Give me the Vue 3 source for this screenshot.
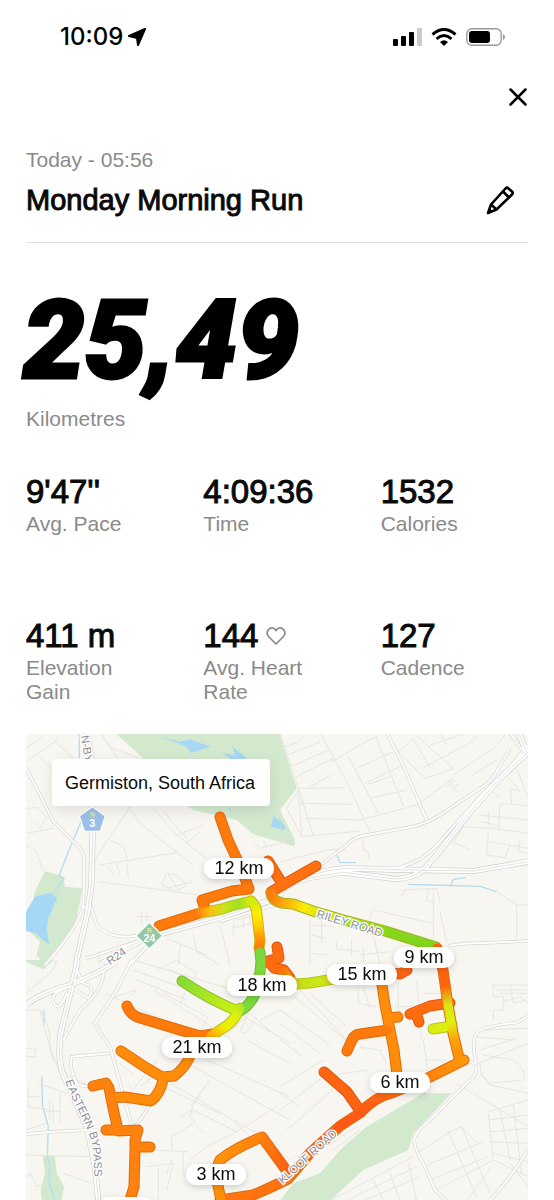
<template>
  <div class="screen">
    <header class="status-bar">
      <div class="clock">
        <span>10:09</span>
        <svg width="18" height="18" viewBox="0 0 18 18" stroke="#000" stroke-width="2" stroke-linejoin="round" aria-hidden="true">
          <path d="M17 1 L10 17 L9 10 L1 8 Z" />
        </svg>
      </div>
      <div class="indicators">
        <svg width="29" height="18" viewBox="0 0 29 18" aria-hidden="true">
          <rect x="0" y="11" width="5" height="7" rx="1" />
          <rect x="8" y="8" width="5" height="10" rx="1" />
          <rect x="16" y="4" width="5" height="14" rx="1" />
          <rect x="24" y="0" width="5" height="18" rx="1" fill="#ccc" />
        </svg>
        <svg width="26" height="18" viewBox="0 0 26 18" aria-hidden="true">
          <g fill="none" stroke="#000" stroke-width="3">
            <path d="M1.5 6.5 Q13 -3.5 24.5 6.5" />
            <path d="M5.5 10.8 Q13 4.2 20.5 10.8" />
          </g>
          <path d="M9 14 Q13 10.5 17 14 L13 18 Z" />
        </svg>
        <svg width="40" height="18" viewBox="0 0 40 18" aria-hidden="true">
          <rect x=".8" y=".8" width="34.4" height="16.4" rx="5" fill="none" stroke="#999" stroke-width="1.4" />
          <rect x="3" y="3" width="21" height="12" rx="3" />
          <path d="M37 6 Q39 7 39 9 Q39 11 37 12 Z" fill="#999" />
        </svg>
      </div>
    </header>

    <main>
      <div class="close-row">
        <button class="icon-button" aria-label="Close">
          <svg width="18" height="18" viewBox="0 0 18 18" fill="none" stroke="#000" stroke-width="2.5" stroke-linecap="round">
            <path d="M1.500 1.500 L16.500 16.500 M16.500 1.500 L1.500 16.500" />
          </svg>
        </button>
      </div>

      <section class="title-block">
        <p class="date">Today - 05:56</p>
        <div class="title-row">
          <h1>Monday Morning Run</h1>
          <button class="icon-button edit" aria-label="Edit name">
            <svg width="28" height="30" viewBox="0 0 28 30" fill="none" stroke="#000" stroke-width="2.6" stroke-linejoin="round">
              <path d="M2 28 L5 19.500 L19.500 3.500 Q21 2 22.500 3.500 L26 6.500 Q27.500 8 26 9.500 L10.500 24.500 Z" />
              <path d="M17 6.500 L23 12.500 M5 19.500 L10.500 24.500" />
              <path d="M2 28 L3.500 23.500 L6.500 26.500 Z" fill="#000" stroke-width="1" />
            </svg>
          </button>
        </div>
      </section>

      <section class="distance">
        <p class="distance-value">25,49</p>
        <p class="label">Kilometres</p>
      </section>

      <section class="stats">
        <div v-for="stat in stats" :key="stat.label" class="stat">
          <p class="value">
            {{ stat.value }}
            <svg v-if="stat.heart" width="20" height="20" viewBox="0 0 20 20" fill="none" stroke="#8a8a8a" stroke-width="1.700" stroke-linejoin="round">
              <path d="M10 18 L2.500 10.500 C-1 6 3 1 7 2 Q9 2.500 10 4.500 Q11 2.500 13 2 C17 1 21 6 17.500 10.500 Z" />
            </svg>
          </p>
          <p class="label">{{ stat.label }}</p>
        </div>
      </section>

      <section class="map">
        <svg class="map-canvas" viewBox="0 0 1506 1398">
          <defs>
            <linearGradient v-for="g in gradients" :id="g.id" :key="g.id" gradientUnits="userSpaceOnUse" :x1="g.from[0]" :y1="g.from[1]" :x2="g.to[0]" :y2="g.to[1]">
              <stop v-for="(c, i) in g.colors" :key="i" :offset="i / (g.colors.length - 1)" :stop-color="c" />
            </linearGradient>
            <path id="bypass-line" d="M118 1042 C150 1130 195 1180 202 1260 L206 1350" />
            <filter id="pin-shadow" x="-30%" y="-50%" width="160%" height="220%">
              <feDropShadow dx="0" dy="2" stdDeviation="3" flood-opacity=".18" />
            </filter>
          </defs>
          <rect width="1506" height="1398" fill="#f7f6f0" />

          <g v-for="(tile, i) in tiles" :key="i" :transform="`translate(${tile.x} ${tile.y})`">
            <path v-for="d in tile.parks" :key="d" :d="d" class="park" />
            <path v-for="d in tile.water" :key="d" :d="d" class="water" />
            <path v-for="d in tile.streams" :key="d" :d="d" class="stream" />
            <path :d="tile.streets" class="street" />
          </g>
          <g v-for="(tile, i) in tiles" :key="i" :transform="`translate(${tile.x} ${tile.y})`">
            <path :d="tile.roads" class="road-edge" />
            <path :d="tile.highways" class="highway-edge" />
          </g>
          <g v-for="(tile, i) in tiles" :key="i" :transform="`translate(${tile.x} ${tile.y})`">
            <path :d="tile.roads" class="road" />
            <path :d="tile.highways" class="highway" />
            <path :d="tile.highways" class="median" />
          </g>

          <g transform="scale(3) translate(-26 -734)">
            <path v-for="(r, i) in route" :key="i" :d="r.d" class="route-edge" :stroke="r.edge || '#e06a08'" />
            <path v-for="(r, i) in route" :key="i" :d="r.d" class="route" :stroke="r.color" />
          </g>

          <path d="M199 218 L238 246 L223 292 H175 L160 246 Z" class="shield" fill="#9cc0e8" />
          <text x="199" y="250" class="shield-letter">N</text>
          <text x="199" y="279" class="shield-number">3</text>
          <path d="M370 565 L410 605 L370 645 L330 605 Z" class="shield" fill="#92c8a6" />
          <text x="370" y="597" class="shield-letter">R</text>
          <text x="370" y="625" class="shield-number">24</text>

          <text class="road-name" transform="translate(164 6) rotate(80)">N-BY</text>
          <text class="road-name" transform="translate(252 694) rotate(-35)">R24</text>
          <text class="road-name" transform="translate(870 549) rotate(17)">RILEY ROAD</text>
          <text class="road-name" transform="translate(770 1351) rotate(-42)">KLOOF ROAD</text>
          <text class="road-name"><textPath href="#bypass-line">EASTERN BYPASS</textPath></text>

          <g transform="scale(3) translate(-26 -734)">
            <g v-for="pin in pins" :key="pin.x" filter="url(#pin-shadow)">
              <rect :x="pin.x - pin.w / 2" :y="pin.y - 10" :width="pin.w" height="21" rx="10" fill="#fff" />
              <text :x="pin.x" :y="pin.y + 6" class="pin-text">{{ pin.text }}</text>
            </g>
          </g>
        </svg>
        <p class="place">Germiston, South Africa</p>
      </section>
    </main>
  </div>
</template>

<script setup>
const stats = [
  { value: "9'47''", label: 'Avg. Pace' },
  { value: '4:09:36', label: 'Time' },
  { value: '1532', label: 'Calories' },
  { value: '411 m', label: 'Elevation Gain' },
  { value: '144', label: 'Avg. Heart Rate', heart: true },
  { value: '127', label: 'Cadence' },
]

const pins = [
  { text: '12 km', x: 239, y: 868, w: 70 },
  { text: '18 km', x: 262, y: 985, w: 70 },
  { text: '15 km', x: 362, y: 974, w: 70 },
  { text: '9 km', x: 424, y: 957, w: 60 },
  { text: '21 km', x: 197, y: 1047, w: 70 },
  { text: '6 km', x: 400, y: 1082, w: 60 },
  { text: '3 km', x: 216, y: 1174, w: 60 },
  { text: '', x: 126, y: 1207, w: 56 },
]

// --- Route ---
const orange = '#ff7a0c'
const amber = '#ff8c0a'
const red = '#ff6410'
const lime = '#c8ea18'
const green = '#7cd83c'

const gradients = [
  { id: 'g-west', from: [196, 910], to: [252, 901], colors: [orange, '#ffc010', '#c8e41c', '#a0e020', '#d8ec10'] },
  { id: 'g-neck', from: [256, 903], to: [260, 948], colors: ['#d0ec10', '#fff000', '#ffd200', '#ff9a0a', orange] },
  { id: 'g-riley', from: [271, 895], to: [436, 947], colors: [orange, '#fbe808', '#c0e814', '#94dc14', '#84d41c', '#80d820'] },
  { id: 'g-south', from: [260, 990], to: [212, 1036], colors: [green, '#90dc30', '#d8f010', '#eef000', '#ffae08'] },
  { id: 'g-branch', from: [182, 981], to: [240, 1011], colors: ['#84dc34', '#b0e81c', '#cdf010'] },
  { id: 'g-mid', from: [284, 974], to: [332, 980], colors: [orange, '#c8d818', lime, '#d8d810'] },
  { id: 'g-east', from: [442, 968], to: [460, 1058], colors: [red, red, '#d8e414', '#dff010', '#ffa00a', amber] },
  { id: 'g-kloof', from: [280, 1185], to: [465, 1060], colors: ['#ff7410', '#ff5a14', '#ff5a14', '#ff7a10', '#ff980a'] },
  { id: 'g-loop', from: [220, 1160], to: [288, 1172], colors: ['#ff920a', '#ff820c', '#ff5c14'] },
]

const limeEdge = '#b8c41c'
const greenEdge = '#6cba34'
const redEdge = '#dc5610'

const route = [
  { d: 'M220 817 L228 840 L241 868 L249 889 L232 891 L202 900 L206 911', color: orange },
  { d: 'M159 926 L200 913', color: orange },
  { d: 'M200 913 L222 909 L231 906 L251 901', color: 'url(#g-west)', edge: limeEdge },
  { d: 'M268 861 L283 885 M316 866 L281 886 L271 892', color: '#ff7010', edge: redEdge },
  { d: 'M271 893 Q272 901 282 903 L293 904 L313 911 L340 919 L385 931 L436 947', color: 'url(#g-riley)', edge: '#a2b41c' },
  { d: 'M277 947 L279 958 L268 961 L274 968 L284 970 L290 978', color: '#ff6c10', edge: redEdge },
  { d: 'M251 901 Q257 906 257 915 L260 941 L259 948', color: 'url(#g-neck)', edge: '#d8b010' },
  { d: 'M260 952 L261 962 L260 972 L256 992 Q250 1006 240 1011', color: green, edge: greenEdge },
  { d: 'M182 981 Q205 997 235 1010', color: 'url(#g-branch)', edge: '#88bc28' },
  { d: 'M127 1006 Q130 1015 140 1018 L170 1027 L200 1036 L213 1034', color: orange },
  { d: 'M240 1008 Q234 1023 220 1030 L211 1036', color: 'url(#g-south)', edge: limeEdge },
  { d: 'M284 972 Q288 982 297 984 L310 983 L340 978', color: 'url(#g-mid)', edge: limeEdge },
  { d: 'M390 973 L400 974 L407 970', color: red, edge: redEdge },
  { d: 'M121 1051 L145 1067 L162 1077 L174 1076 Q185 1068 190 1056 M163 1080 Q160 1094 151 1101 L125 1097 L112 1098', color: amber },
  { d: 'M93 1086 L106 1083 L109 1088 L113 1108 L118 1130 L106 1130 M118 1131 L138 1130 L135 1140 L135 1147 L150 1147 M135 1150 L134 1187 L129 1203', color: '#ff820e' },
  { d: 'M382 985 L385 1005 L388 1020 L394 1050 L397 1075 M388 1018 L398 1017', color: amber },
  { d: 'M388 1030 L360 1034 Q355 1034 352 1040 L347 1051', color: orange },
  { d: 'M450 1003 L430 1006 L410 1014 L416 1013 L419 1022', color: '#ff6c10', edge: redEdge },
  { d: 'M433 1029 L452 1026', color: '#dced10', edge: limeEdge },
  { d: 'M437 948 L443 970 L448 1005 L453 1033 L459 1058', color: 'url(#g-east)' },
  { d: 'M324 1072 L347 1092 L361 1112', color: '#ff6410', edge: redEdge },
  { d: 'M220 1200 L253 1195 Q270 1188 288 1179 L310 1153 L340 1126 L360 1113 Q375 1097 392 1093 L430 1077 L464 1060', color: 'url(#g-kloof)' },
  { d: 'M221 1200 L215 1172 L220 1160 Q235 1148 262 1137 L289 1174', color: 'url(#g-loop)' },
]

// --- Base map, four tiles ---
const tiles = [
  {
    x: -18,
    y: -27,
    parks: [
      'M285 24 L360 90 L430 200 L520 255 L650 285 L700 328 L822 364 L780 255 L830 190 L778 24 Z',
      'M75 438 L130 455 L135 485 L187 490 L165 610 L120 670 L75 720 L50 690 L60 650 L18 610 L45 500 Z',
    ],
    water: [
      'M425 35 L480 50 L510 43 L572 65 L540 75 L512 84 L500 66 Z',
      'M605 82 L645 92 L636 63 L682 100 L640 108 Z',
      'M762 270 L775 288 L800 298 L775 312 L752 304 Z',
      'M45 515 L90 503 L112 518 L85 580 L80 612 L88 658 L68 645 L50 625 L18 618 V560 Z',
    ],
    streams: ['M178 24 V100', 'M183 290 L145 380 L118 450 L132 462 L95 510', 'M630 240 V260'],
    streets: 'M18 70 L60 40 L75 24 M18 110 L105 50 L160 100 M60 95 L95 130 M105 50 L120 24 M18 250 L50 248 L80 275 L60 310 L40 290 M18 325 L100 310 M18 360 L50 380 L70 440 M240 24 L300 110 M330 245 L230 395 L215 450 M240 24 L275 70 L360 100 M325 245 L365 300 L520 420 M240 420 L475 382 M270 345 L310 365 L325 410 M265 425 L280 450 M290 420 L300 445 M320 415 L325 455 M235 470 L540 510 M400 250 L470 330 L560 400 M430 260 L500 340 M470 330 L550 300 M500 355 L540 320 M425 480 L440 445 L470 450 L500 480 L470 500 Z M445 450 L480 500 M440 490 L520 470 M350 575 H400 M365 560 V600 M380 565 V590 M640 590 V630 M650 585 L705 570 M670 580 V610 M690 575 V605 M640 608 L700 595 M520 625 L530 680 L600 720 M600 600 L630 720 M700 350 L720 370 L800 350 M730 345 L740 370 M235 680 L240 720 M440 640 L560 690 M480 660 L475 720',
    roads: 'M18 130 L55 200 L100 290 L180 370 Q194 385 193 420 L190 540 Q180 600 75 720 M190 545 L215 552 L230 600 Q270 645 350 632 M385 660 L330 720 M200 700 L350 650 M600 590 L810 525',
    highways: 'M200 24 L214 100 L218 320 L214 480 L203 560 L167 720 M240 720 Q320 660 410 630 L600 578 L740 530 L785 505',
  },
  {
    x: 762,
    y: -27,
    parks: ['M0 255 L20 295 L45 345 L42 364 L0 345 Z'],
    water: ['M-4 275 L18 310 L4 318 Z'],
    streams: ['M170 390 L180 412 L228 413', 'M385 478 L455 480 L600 484 L650 500', 'M512 480 L520 464 L556 458'],
    streets: 'M0 70 L60 50 L75 24 M10 95 L120 50 M20 130 L145 75 M50 155 L160 100 M0 24 L55 190 L65 335 L20 250 L60 190 L195 188 M55 190 L100 330 M65 335 L240 318 M60 235 L220 238 M75 280 L250 285 M90 185 L155 150 M120 24 L200 170 L270 320 M155 110 L240 60 L300 30 M205 95 L295 265 M230 130 L340 80 M255 175 L370 120 M275 218 L380 195 M290 40 L370 245 M240 285 L410 240 L520 160 M260 180 L330 155 M355 80 L400 42 L440 110 L450 130 M370 95 L435 160 L520 130 M400 24 L520 130 M425 130 L560 60 L600 24 M480 24 L500 60 M450 60 L560 24 M520 150 L640 70 L680 24 M570 155 L650 105 M505 165 L530 200 M515 190 L540 175 M500 185 L525 165 M520 350 L550 305 L640 310 L745 325 M520 352 L565 372 M600 270 L745 285 M605 290 L650 300 M625 260 V300 M660 235 L655 315 M665 235 L745 243 M625 320 L620 390 L675 398 L690 360 L625 350 M690 360 L745 370 M720 345 L715 380 L745 385 M640 200 L660 220 M680 150 L720 200 L690 190 L695 235 M710 130 L745 220 M0 350 L40 340 M0 410 L140 375 L180 372 M248 340 L250 375 L265 382 V402 M365 515 L372 495 L470 490 L480 530 M445 490 L440 525 L460 535 M460 490 V650 M480 560 L500 650 M275 555 L270 580 L300 720 M280 555 L460 595 M650 500 L710 540 H745 M710 540 V640 M90 580 V720 M100 600 L160 605 M125 580 V655 M95 630 L140 640 M95 685 L140 690 M170 650 V672 L240 680 M215 640 V690 M240 690 L330 680 M250 670 V710',
    roads: 'M110 430 L200 360 Q220 335 260 330 L400 305 Q450 290 480 270 L600 190 Q630 175 650 140 L690 70 M320 24 L360 100 L440 285 M505 662 Q550 655 610 654 L745 648 M350 430 Q430 410 480 350 L600 215 L690 125 L745 60 M690 24 L730 80',
    highways: 'M0 500 Q90 435 200 430 L350 434 L580 438 L745 410 M0 480 Q90 455 190 442 L345 462 Q400 460 430 435 L470 390 L570 262 L660 160 L745 80 M715 24 L740 80',
  },
  {
    x: -18,
    y: 678,
    parks: ['M18 0 H100 L70 28 L18 5 Z', 'M68 585 H105 L110 640 L132 680 L125 722 H65 L62 690 L75 640 Z'],
    water: [],
    streams: ['M72 150 V195', 'M65 350 L68 440 L85 500 L82 590 L90 620 L85 660 L105 722'],
    streets: 'M18 100 L100 30 L110 0 M18 150 L60 150 L100 300 L150 350 L210 380 M60 150 Q95 200 90 260 L120 340 M18 265 H45 V290 H18 M25 380 V440 L90 450 M25 410 H60 M90 420 V480 M100 430 V490 M75 455 H120 M120 400 V490 M55 370 L140 400 M18 510 L80 490 M18 585 L220 590 M30 640 L50 680 L75 670 M18 650 L40 640 M130 640 L215 670 M260 100 L550 240 M285 110 L350 90 L330 110 M340 30 L480 80 L560 130 L640 150 M340 0 L640 90 M410 30 L470 0 L530 40 L520 65 L440 25 M350 60 L500 120 M400 90 L575 200 L540 230 M430 100 L560 170 M480 130 L500 90 L560 110 M565 170 L545 205 M600 240 L690 160 L770 230 M680 240 L810 310 M640 150 L810 250 M720 180 L780 150 L810 170 M660 215 L680 170 L700 190 L675 220 Z M560 300 L810 410 M500 310 L810 480 M450 370 L640 480 L780 560 M430 380 L600 460 M480 470 L520 450 L650 515 L770 440 M520 430 L510 470 L550 520 M540 410 L510 440 M570 360 L520 430 M650 515 L560 560 L510 600 M455 570 V530 L520 490 M400 310 L340 390 L320 370 M410 300 L380 370 M360 380 L400 350 M300 310 L340 345 M380 620 L460 610 L440 690 M415 620 V722 M490 570 V640 M400 570 L500 575 M700 510 L810 600 M455 600 L440 640 M640 480 L700 540',
    roads: 'M335 0 L290 90 L225 190 Q240 220 270 260 L335 495 L350 495 L400 420 M270 280 L155 290 L152 310 Q160 360 175 375 L210 380 M18 522 L100 515 L250 508 M160 72 L105 100 Q90 130 115 140 Q130 130 140 100 M170 30 L190 70 Q230 80 205 115 L175 95 M250 20 Q260 80 180 150 L130 240',
    highways: 'M18 135 Q60 100 150 75 L230 40 L290 5 M173 0 L158 70 L122 220 Q112 290 128 340 L200 500 L225 620 L235 722',
  },
  {
    x: 762,
    y: 678,
    parks: ['M430 400 L515 400 L400 520 L385 570 L250 630 L150 722 H0 L40 670 L120 640 L190 560 L260 500 Z'],
    water: [],
    streams: [],
    streets: 'M0 150 L150 255 M0 190 L120 280 M0 240 L70 290 M20 90 L220 260 M50 80 L200 240 M90 100 L200 200 M0 380 L130 300 M0 450 L130 350 L260 330 M20 510 L170 380 M0 400 L60 440 M140 560 L230 500 M160 570 L240 510 M235 80 V130 L290 140 M250 80 L270 145 M355 60 V160 M410 60 L425 240 M430 100 H490 M345 140 H420 M430 240 L445 340 M240 262 L300 270 L320 310 M430 300 H500 M635 75 H745 M650 90 H740 M640 75 V110 L670 110 V150 H640 V180 M690 75 L700 130 L735 120 M660 100 H745 M670 125 L720 110 L745 130 M620 210 L745 205 M595 310 L745 250 M600 340 L630 375 L745 400 M600 310 Q600 350 630 370 L730 360 Q745 330 700 300 L610 285 M580 230 L700 240 M600 270 L710 235 M530 370 L745 500 M625 455 L745 420 M625 460 L640 600 L745 650 M625 480 L745 465 M635 515 L745 505 M635 545 L745 550 M640 580 L745 605 M660 450 L690 600 M700 435 L725 640 M635 620 L560 722 M410 580 L520 510 L545 500 L590 550 M430 620 L610 545 M450 660 L625 590 M470 690 L640 600 M505 515 L590 710 M545 500 L630 700 M150 722 L400 590 M200 722 L410 620 M250 722 L420 650 M280 660 L310 722 M330 640 L360 722 M385 610 L410 722 M690 610 L745 680',
    roads: 'M745 165 Q720 190 690 190 Q610 200 590 220 Q578 235 583 280 L590 320 Q590 350 560 370 L450 480 Q400 520 403 545 Q405 570 430 610 L465 690 L500 722 M745 570 L690 650 L630 722 M565 305 L590 310',
    highways: '',
  },
]
</script>

<style>
body {
  margin: 0;
  background: #fff;
}
</style>

<style scoped>
.screen {
  background: #fff;
  color: #0a0a0a;
  font-family: 'Liberation Sans', Arial, sans-serif;
}
p,
h1 {
  margin: 0;
}
svg {
  display: block;
  flex-shrink: 0;
}
.status-bar {
  display: flex;
  align-items: center;
  justify-content: space-between;
  height: 74px;
  padding: 0 48px 0 60px;
}
.clock {
  display: flex;
  align-items: center;
  gap: 5px;
  font: 500 24px/28px Inter, sans-serif;
  color: #000;
}
.indicators {
  display: flex;
  align-items: center;
  gap: 9px;
}
main {
  padding: 0 26px;
}
.close-row {
  display: flex;
  justify-content: flex-end;
  padding: 14px 0 40px;
}
.icon-button {
  display: block;
  padding: 0;
  border: 0;
  background: none;
  cursor: pointer;
}
.close-row .icon-button {
  margin: 0 1px 0 0;
}
.title-block {
  padding-bottom: 22px;
  border-bottom: 1px solid #e0e0e0;
}
.date {
  font-size: 21px;
  line-height: 28px;
  color: #8a8a8a;
}
.title-row {
  display: flex;
  align-items: center;
  justify-content: space-between;
  margin-top: 6px;
}
h1 {
  font-size: 29px;
  font-weight: 400;
  line-height: 40px;
  -webkit-text-stroke: 1px #0a0a0a;
}
.edit {
  margin-right: 14px;
}
.distance-value {
  margin: 44px 0 0 -3px;
  font: italic 900 110px/108px Roboto, sans-serif;
  color: #000;
  -webkit-text-stroke: 3px #000;
}
.label {
  max-width: 126px;
  font-size: 21px;
  line-height: 24px;
  color: #8a8a8a;
}
.distance .label {
  margin-top: 12px;
}
.stats {
  display: grid;
  grid-template-columns: repeat(3, 1fr);
  gap: 80px 30px;
  margin-top: 41px;
}
.value {
  display: flex;
  align-items: center;
  gap: 8px;
  font-size: 33px;
  line-height: 40px;
  -webkit-text-stroke: 1px #0a0a0a;
}
.map {
  position: relative;
  margin-top: 30px;
  border-radius: 5px 5px 0 0;
  overflow: hidden;
}
.map-canvas {
  width: 100%;
  height: auto;
}
.place {
  position: absolute;
  top: 25px;
  left: 26px;
  padding: 12px 15px 11px 13px;
  border-radius: 4px;
  background: #fff;
  box-shadow: 0 4px 14px rgba(0, 0, 0, 0.1);
  font-size: 18px;
  line-height: 24px;
}
.park {
  fill: #d3e9ce;
}
.water {
  fill: #a6d8f6;
}
.stream {
  fill: none;
  stroke: #b4ddf2;
  stroke-width: 4;
}
.street {
  fill: none;
  stroke: #e6e5df;
  stroke-width: 3;
}
.road-edge {
  fill: none;
  stroke: #d6d5d2;
  stroke-width: 10;
}
.highway-edge {
  fill: none;
  stroke: #cfcecc;
  stroke-width: 18;
}
.road {
  fill: none;
  stroke: #fff;
  stroke-width: 6;
}
.highway {
  fill: none;
  stroke: #fff;
  stroke-width: 14;
}
.median {
  fill: none;
  stroke: #d2d1cf;
  stroke-width: 2;
}
.route-edge,
.route {
  fill: none;
  stroke-linecap: round;
  stroke-linejoin: round;
}
.route-edge {
  stroke-width: 11;
}
.route {
  stroke-width: 9;
}
.shield {
  stroke: #fff;
  stroke-width: 4;
}
.shield-letter,
.shield-number {
  text-anchor: middle;
  font-weight: 700;
}
.shield-letter {
  font-size: 20px;
  fill: #e2eaa0;
}
.shield-number {
  font-size: 32px;
  fill: #fff;
}
.road-name {
  font-size: 34px;
  fill: #8d8d93;
  stroke: #fff;
  stroke-width: 8;
  paint-order: stroke;
}
.pin-text {
  font-size: 18px;
  text-anchor: middle;
  fill: #0a0a0a;
}
</style>
